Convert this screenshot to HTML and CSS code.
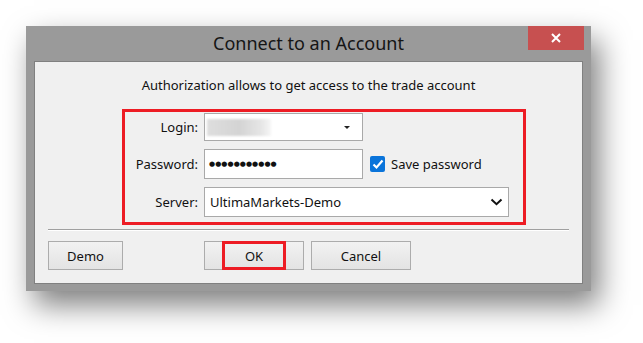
FILE: index.html
```html
<!DOCTYPE html>
<html lang="en">
<head>
  <meta charset="UTF-8" />
  <title>Connect to an Account</title>
  <link rel="stylesheet" href="styles.css">
</head>
<body>

<div class="dialog">
  <div class="titlebar">
    <span></span>
    <h1>Connect to an Account</h1>
    <button class="close-btn" type="button">
      <svg width="10" height="10" viewBox="0 0 10 10"><path d="M1 1 L9 9 M9 1 L1 9" stroke="#fff" stroke-width="2" /></svg>
    </button>
  </div>

  <div class="panel">
    <p class="intro">Authorization allows to get access to the trade account</p>

    <div class="fields">
      <label>Login:</label>
      <div class="field login-field">
        <span class="hidden-login"></span>
        <span class="caret"></span>
      </div>
      <span></span>

      <label>Password:</label>
      <div class="field pass-field">●●●●●●●●●●●</div>
      <div class="save">
        <span class="checkbox">
          <svg width="12" height="12" viewBox="0 0 12 12"><path d="M1.5 6.5 L4.5 9.5 L10.5 2.5" fill="none" stroke="#fff" stroke-width="2.2" /></svg>
        </span>
        Save password
      </div>

      <label>Server:</label>
      <div class="field server-field">
        <span>UltimaMarkets-Demo</span>
        <svg width="13" height="8" viewBox="0 0 13 8"><path d="M1.5 1.5 L6.5 6.2 L11.5 1.5" fill="none" stroke="#111" stroke-width="2" /></svg>
      </div>
    </div>

    <hr class="separator">

    <div class="buttons">
      <button type="button" class="btn">Demo</button>
      <button type="button" class="btn ok-btn">OK</button>
      <button type="button" class="btn">Cancel</button>
    </div>
  </div>
</div>

</body>
</html>
```

FILE: styles.css
```css
html, body {
  height: 100%;
}

body {
  margin: 0;
  padding-top: 26px;
  box-sizing: border-box;
  background: #fff;
  font-family: 'Segoe UI', 'Noto Sans', sans-serif;
  color: #111;
}

.dialog {
  width: 565px;
  margin-left: 26px;
  padding: 0 8px 7px 8px;
  box-sizing: border-box;
  background-color: #9a9a9a;
  box-shadow: 8px 14px 28px rgba(0,0,0,0.5);
}

.titlebar {
  display: grid;
  grid-template-columns: 1fr auto 1fr;
  height: 35px;
  margin: 0 -8px;
}

.titlebar h1 {
  margin: 0;
  font-size: 18px;
  font-weight: normal;
  line-height: 35px;
  color: #151515;
}

.close-btn {
  justify-self: end;
  align-self: start;
  width: 56px;
  height: 24px;
  margin-right: 7px;
  border: none;
  padding: 0;
  background-color: #c75050;
  display: flex;
  align-items: center;
  justify-content: center;
}

.panel {
  background-color: #f0f0f0;
  border: 1px solid #808080;
  padding: 15px 0 13px;
}

.intro {
  margin: 0;
  font-size: 13px;
  line-height: 17px;
  text-align: center;
}

.fields {
  width: 404px;
  box-sizing: border-box;
  margin: 15px 0 0 87px;
  padding: 1px 14px 5px 0;
  border: 3px solid #ed1c24;
  display: grid;
  grid-template-columns: 73px 159px auto;
  grid-template-rows: 28px 30px 30px;
  column-gap: 6px;
  row-gap: 8px;
  align-items: center;
}

.fields label {
  text-align: right;
  font-size: 13px;
}

.field {
  height: 100%;
  box-sizing: border-box;
  background-color: #fff;
  border: 1px solid #a9a9a9;
  display: flex;
  align-items: center;
  font-size: 13px;
}

.login-field {
  justify-content: space-between;
  padding: 0 12px 0 2px;
}

.hidden-login {
  width: 64px;
  height: 17px;
  background: linear-gradient(to right, #dedede, #d4d4d4 50%, #e6e6e6 85%, #f6f6f6);
  filter: blur(1px);
}

.caret {
  border-left: 3px solid transparent;
  border-right: 3px solid transparent;
  border-top: 3px solid #222;
}

.pass-field {
  padding-left: 4px;
  font-family: 'DejaVu Sans', sans-serif;
  font-size: 7px;
  letter-spacing: 0.05px;
}

.save {
  display: flex;
  align-items: center;
  gap: 6px;
  margin-left: 1px;
  font-size: 13px;
  white-space: nowrap;
}

.checkbox {
  width: 15px;
  height: 16px;
  border-radius: 2px;
  background-color: #0a74da;
  display: flex;
  align-items: center;
  justify-content: center;
}

.server-field {
  grid-column: 2 / 4;
  width: 305px;
  justify-content: space-between;
  padding: 0 5px 0 5px;
}

.separator {
  margin: 4px 13px 0;
  border: none;
  border-top: 1px solid #a0a0a0;
  border-bottom: 1px solid #fff;
}

.buttons {
  display: flex;
  gap: 7px;
  margin-top: 10px;
  padding-left: 13px;
}

.btn {
  height: 29px;
  width: 100px;
  border: 1px solid #acacac;
  background: linear-gradient(#f2f2f2, #e3e3e3);
  font-family: inherit;
  font-size: 13px;
  color: #111;
  padding: 0;
}

.buttons .btn:first-child {
  width: 75px;
  margin-right: 74px;
}

.ok-btn {
  position: relative;
}

.ok-btn::after {
  content: '';
  position: absolute;
  left: 17px;
  right: 17px;
  top: -1px;
  bottom: -1px;
  border: 3px solid #ed1c24;
}
```
